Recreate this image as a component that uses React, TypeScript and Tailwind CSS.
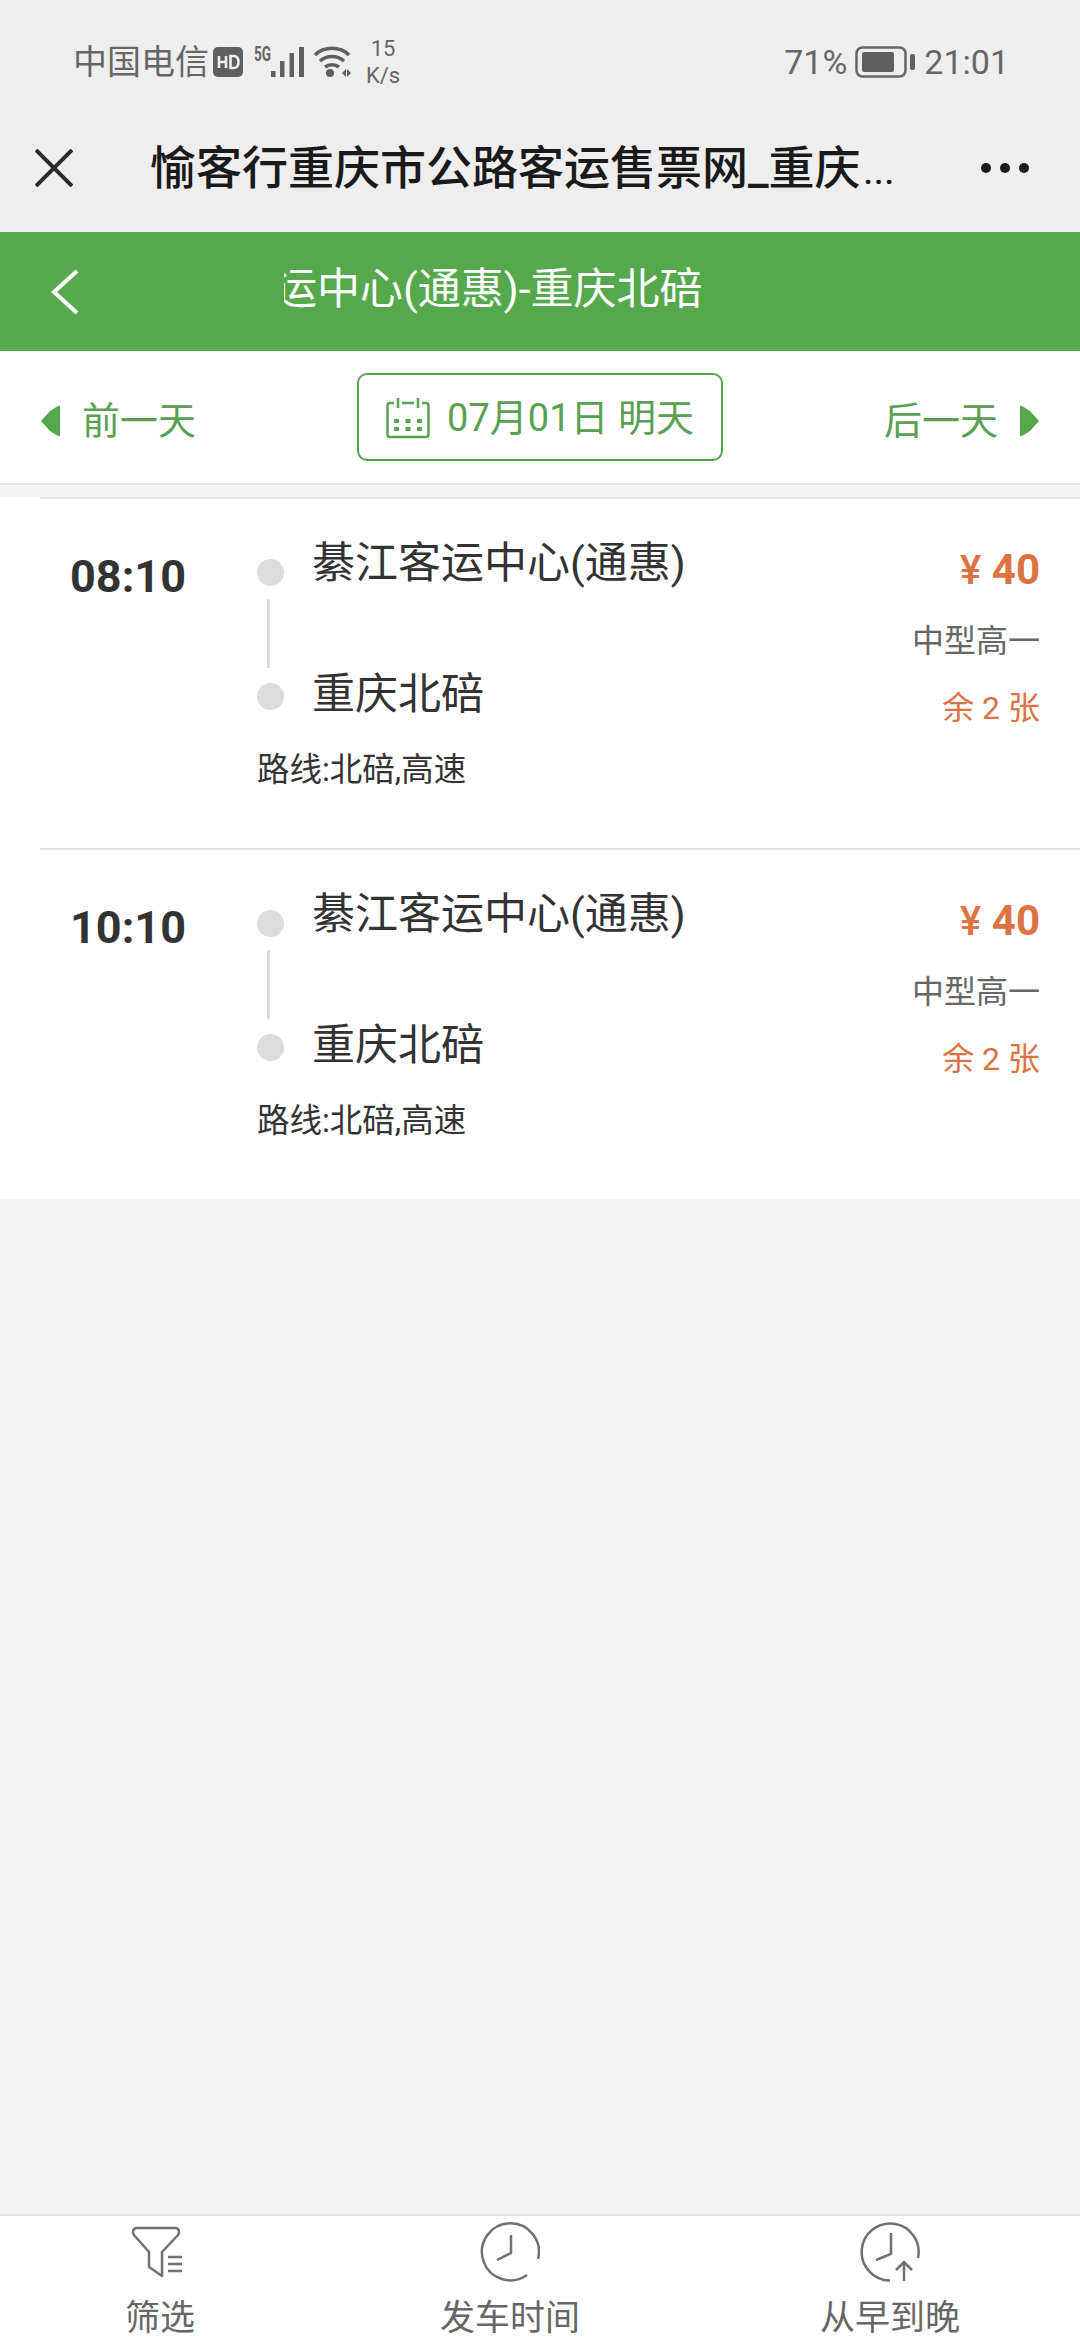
const sans = "font-['Roboto','Noto_Sans_CJK_SC','Noto_Sans',sans-serif]";

function Ticket({ time }: { time: string }) {
  return (
    <div className="relative h-[351px] bg-white">
      <div className="absolute left-[40px] right-0 top-0 h-[2px] bg-[#e3e3e3]" />
      <div className="flex h-full">
        <div className="w-[257px] pl-[70px] pt-[52px] text-[45px] leading-[56px] font-bold text-[#333333]">{time}</div>
        <div className="flex w-[46px] flex-col items-start pt-[62px]">
          <div className="h-[27px] w-[27px] rounded-full bg-[#dcdcdc]" />
          <div className="ml-[10px] mt-[13px] h-[69px] w-[3px] bg-[#dcdcdc]" />
          <div className="mt-[15px] h-[27px] w-[27px] rounded-full bg-[#dcdcdc]" />
        </div>
        <div className="flex flex-1 flex-col pt-[35px]">
          <div className="pl-[9px] text-[43px] leading-[62px] whitespace-nowrap text-[#333333]">綦江客运中心(通惠)</div>
          <div className="mt-[69px] pl-[9px] text-[43px] leading-[62px] text-[#333333]">重庆北碚</div>
          <div className="-ml-[46px] mt-[22px] text-[32.5px] leading-[46px] text-[#333333]">路线:北碚,高速</div>
        </div>
        <div className="flex w-[200px] flex-col items-end pr-[40px] pt-[45px]">
          <div className="text-[42px] leading-[56px] font-bold text-[#dd7242]"><span className="text-[40px] font-medium">¥</span> 40</div>
          <div className="mt-[19px] text-[32px] leading-[46px] text-[#666666]">中型高一</div>
          <div className="mt-[21px] text-[32px] leading-[46px] text-[#dd7242]">余 2 张</div>
        </div>
      </div>
    </div>
  );
}

export default function App() {
  return (
    <div className={`flex h-[2340px] w-[1080px] flex-col overflow-hidden bg-[#f4f4f4] ${sans}`}>
      <div className="h-[232px] shrink-0 bg-[#eeeeee]">
        <div className="flex h-[116px] items-center pl-[73px] pr-[71px] pt-[8px] text-[#666666]">
          <span className="text-[34px] leading-[40px] whitespace-nowrap">中国电信</span>
          <svg className="ml-[4px]" width="30" height="30" viewBox="0 0 30 30"><rect width="30" height="30" rx="5" fill="#5f5f5f" /><path d="M6 9v12M6 15h7M13 9v12M17.5 9v12h3c3 0 5-2 5-6s-2-6-5-6z" stroke="#eeeeee" strokeWidth="2.6" fill="none" /></svg>
          <div className="ml-[11px] h-[30px] w-[17px]">
            <span className="block origin-top-left scale-x-[0.85] scale-y-[1.25] text-[16px] leading-[12px] font-bold">5G</span>
          </div>
          <svg width="33" height="30" viewBox="0 0 33 30"><path d="M0 24h4.500v6H0zM9 14h4.500v16H9zM18.500 6h4.500v24h-4.500zM28 0h5v30h-5z" fill="#5f5f5f" /></svg>
          <svg className="ml-[9px]" width="38" height="32" viewBox="0 0 38 32"><path d="M2 9C11 0 27 0 36 9M7 15c7-6 17-6 24 0M12 21c4-3 10-3 14 0" stroke="#5f5f5f" strokeWidth="3.5" fill="none" /><circle cx="17" cy="27" r="4" fill="#5f5f5f" /><path d="M29 27l4-4v8zM38 27l-4-4v8z" fill="#5f5f5f" /></svg>
          <div className="ml-[15px] flex w-[34px] flex-col items-center text-[22px] leading-[27px]"><span>15</span><span className="whitespace-nowrap">K/s</span></div>
          <div className="flex-1" />
          <span className="text-[34px] leading-[40px]">71%</span>
          <svg className="ml-[8px]" width="60" height="32" viewBox="0 0 60 32"><rect x="1.500" y="1.500" width="49" height="29" rx="6" fill="none" stroke="#666666" strokeWidth="2.500" /><rect x="7" y="6" width="32" height="20" rx="2" fill="#5f5f5f" /><rect x="55" y="8" width="5" height="16" rx="2" fill="#5f5f5f" /></svg>
          <span className="ml-[9px] text-[34px] leading-[40px]">21:01</span>
        </div>
        <div className="flex h-[116px] items-center pb-[12px] pr-[51px]">
          <svg className="ml-[35px] shrink-0" width="38" height="38" viewBox="0 0 38 38"><path d="M1 1l36 36M37 1L1 37" stroke="#2b2b2b" strokeWidth="4" fill="none" /></svg>
          <div className="ml-[77px] flex-1 whitespace-nowrap pt-[4px] text-[46px] leading-[56px] font-medium text-[#1a1a1a]">愉客行重庆市公路客运售票网_重庆<span className="ml-[3px] text-[34px] tracking-[1px]">...</span></div>
          <div className="flex gap-[9px]">
            <div className="h-[10px] w-[10px] rounded-full bg-[#1a1a1a]" />
            <div className="h-[10px] w-[10px] rounded-full bg-[#1a1a1a]" />
            <div className="h-[10px] w-[10px] rounded-full bg-[#1a1a1a]" />
          </div>
        </div>
      </div>

      <div className="flex h-[119px] shrink-0 items-center bg-[#55a94c]">
        <svg className="ml-[49px] shrink-0" width="32" height="46" viewBox="0 0 32 46"><path d="M28 2L5 23l23 21" stroke="#ffffff" strokeWidth="4" fill="none" /></svg>
        <div className="ml-[203px] w-[430px] overflow-hidden pb-[5px] text-[43px] leading-[56px] text-white">
          <div className="-ml-[10px] whitespace-nowrap">运中心(通惠)-重庆北碚</div>
        </div>
      </div>

      <div className="flex h-[134px] shrink-0 items-center justify-between border-b-2 border-[#e4e4e4] bg-white pl-[41px] pr-[41px] text-[#5aa052]">
        <div className="flex items-center pt-[8px] text-[38px] leading-[50px]">
          <svg width="19" height="32" viewBox="0 0 19 32"><path d="M19 2v28q0 2-2 1l-8-5L0 16 9 6l8-5q2-1 2 1z" fill="#55a94c" /></svg>
          <span className="ml-[22px]">前一天</span>
        </div>
        <div className="flex h-[88px] w-[366px] items-center justify-center rounded-[10px] border-2 border-[#5a9f52] pt-[2px]">
          <svg width="44" height="42" viewBox="0 0 44 42" fill="none" stroke="#5a9f52" strokeWidth="2.500"><path d="M8 6H4Q1.500 6 1.500 9v28q0 3 2.500 3h36q2.500 0 2.500-3V9q0-3-2.500-3h-4M16 6h12M12 1v10M32 1v10" /><path d="M8 24h5M19.500 24h5M31 24h5M8 32h5M19.500 32h5M31 32h5" strokeWidth="4" /></svg>
          <span className="ml-[17px] text-[38px] leading-[50px] whitespace-nowrap">07月01日 明天</span>
        </div>
        <div className="flex items-center pt-[8px] text-[38px] leading-[50px]">
          <span className="mr-[22px]">后一天</span>
          <svg width="19" height="32" viewBox="0 0 19 32"><path d="M0 2v28q0 2 2 1l8-5 9-10-9-10-8-5q-2-1-2 1z" fill="#55a94c" /></svg>
        </div>
      </div>

      <div className="mt-[12px] shrink-0">
        <Ticket time="08:10" />
        <Ticket time="10:10" />
      </div>

      <div className="flex-1" />

      <div className="flex h-[126px] shrink-0 border-t-2 border-[#e2e2e2] bg-white text-[35px] leading-[40px] text-[#666666]">
        <div className="flex w-[320px] flex-col items-center pt-[10px]">
          <svg className="mr-[7px]" width="52" height="52" viewBox="0 0 52 52" fill="none" stroke="#707070" strokeWidth="2.500" strokeLinejoin="round"><path d="M6 2h38c4 0 5 4 3 7L31 26v24L18 41V26L3 9C1 6 2 2 6 2z" /><path d="M37 31h14M37 38h14M37 45h14" /></svg>
          <span className="mt-[21px]">筛选</span>
        </div>
        <div className="flex w-[380px] flex-col items-center pt-[6px]">
          <svg width="60" height="60" viewBox="0 0 60 60" fill="none" stroke="#707070" strokeWidth="2.500"><path d="M47 53A28.500 28.500 0 1 1 58 37M31 13v18l-14 7" /></svg>
          <span className="mt-[17px]">发车时间</span>
        </div>
        <div className="flex w-[380px] flex-col items-center pt-[6px]">
          <svg width="60" height="60" viewBox="0 0 60 60" fill="none" stroke="#707070" strokeWidth="2.500"><path d="M30 58.500A28.500 28.500 0 1 1 58 36M31 11v21l-15 6" /><path d="M44 59V40M36 48l8-8 8 8" /></svg>
          <span className="mt-[17px]">从早到晚</span>
        </div>
      </div>
    </div>
  );
}
